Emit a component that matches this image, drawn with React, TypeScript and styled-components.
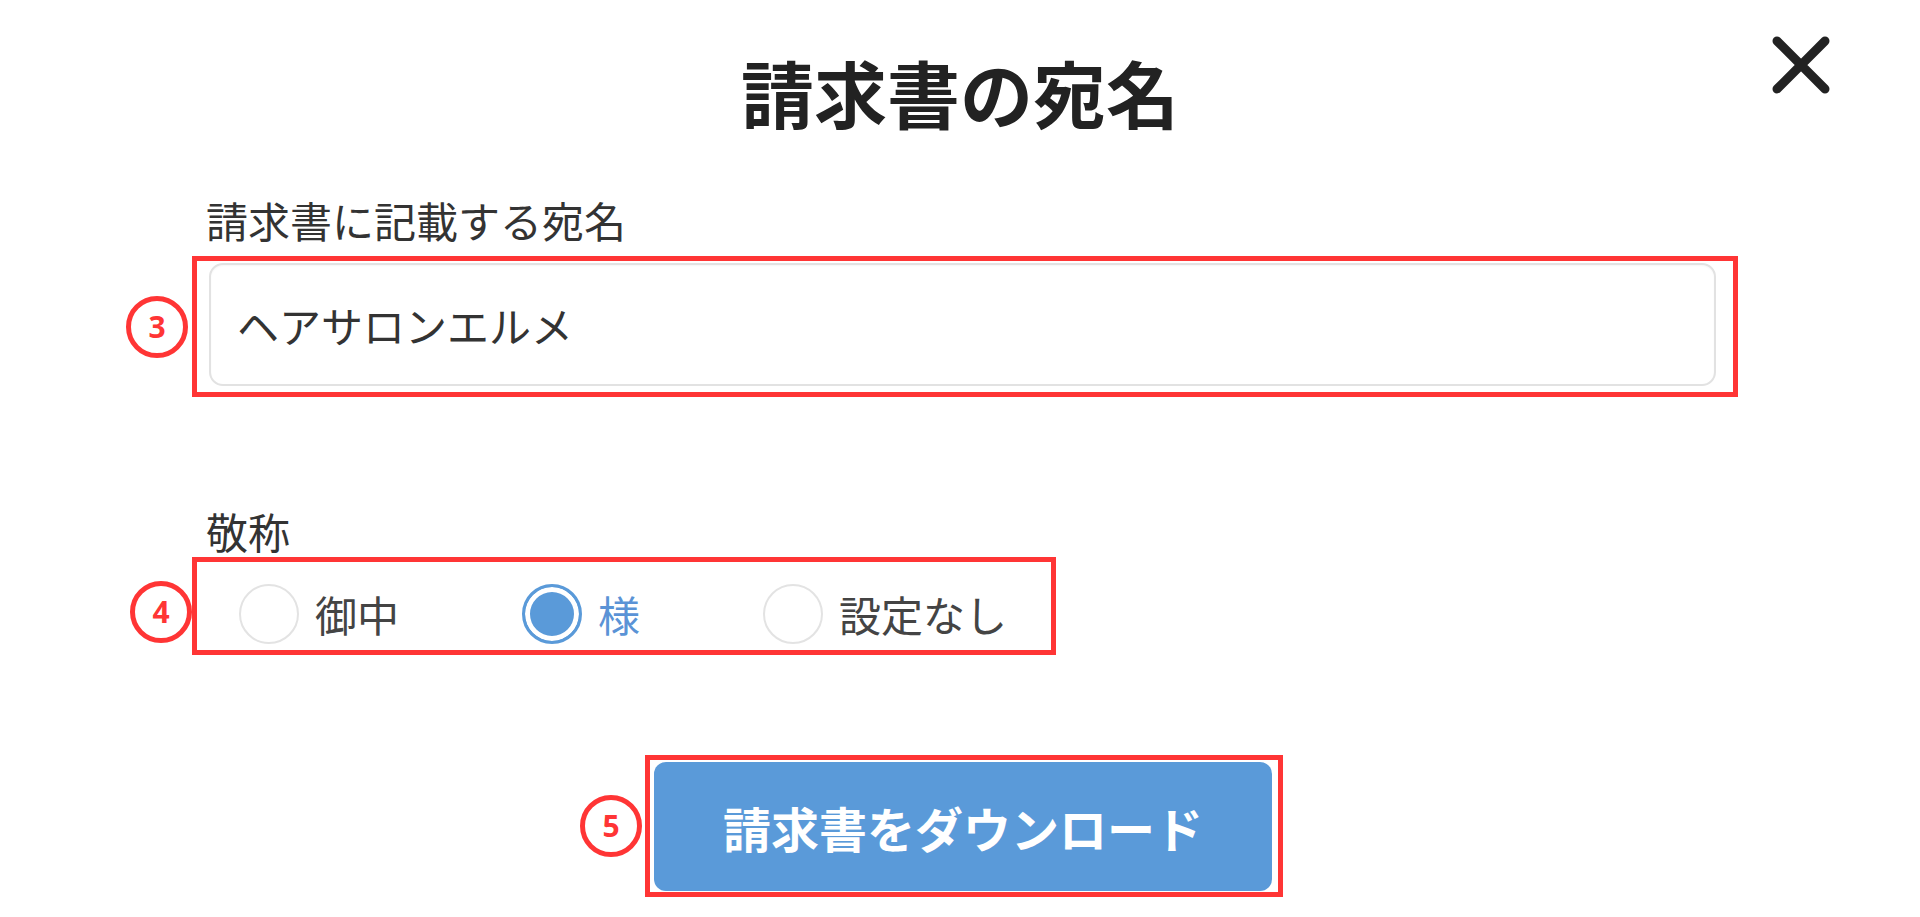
import React from "react";
import styled, { createGlobalStyle } from "styled-components";

const GlobalStyle = createGlobalStyle`
  html, body {
    margin: 0;
    padding: 0;
    background: #ffffff;
  }
  body {
    font-family: "Noto Sans CJK JP", "Noto Sans", sans-serif;
    color: #333333;
  }
`;

const RED = "#ff3535";
const BLUE = "#5a9ad9";

const Page = styled.div`
  position: relative;
  width: 1920px;
  height: 917px;
  overflow: hidden;
  padding-top: 41px;
  box-sizing: border-box;
`;

const CloseButton = styled.button`
  position: absolute;
  top: 34px;
  right: 88px;
  width: 62px;
  height: 62px;
  padding: 0;
  border: none;
  background: none;
  cursor: pointer;
  svg {
    display: block;
  }
`;

const Title = styled.h1`
  margin: 0;
  text-align: center;
  font-size: 73px;
  line-height: 100px;
  font-weight: 700;
  color: #222222;
`;

const Form = styled.div`
  margin: 54px 0 0 192px;
  width: 1546px;
`;

const FieldLabel = styled.div<{ $top?: number; $bottom: number }>`
  margin: ${(p) => p.$top ?? 0}px 0 ${(p) => p.$bottom}px;
  padding-left: 14px;
  font-size: 42px;
  line-height: 50px;
  color: #333333;
`;

const CalloutBox = styled.div<{ $pad: string; $width?: number }>`
  position: relative;
  box-sizing: border-box;
  width: ${(p) => (p.$width ? `${p.$width}px` : "auto")};
  border: 5px solid ${RED};
  padding: ${(p) => p.$pad};
`;

const Marker = styled.span<{ $gap: number; $shift: number }>`
  position: absolute;
  right: calc(100% + ${(p) => p.$gap}px);
  top: 50%;
  transform: translateY(calc(-50% + ${(p) => p.$shift}px));
  width: 62px;
  height: 62px;
  box-sizing: border-box;
  border: 5px solid ${RED};
  border-radius: 50%;
  display: flex;
  align-items: center;
  justify-content: center;
  font-family: "Noto Sans", "Open Sans", sans-serif;
  font-weight: 700;
  font-size: 30px;
  line-height: 1;
  color: ${RED};
`;

const Callout = ({
  num,
  pad,
  width,
  gap,
  shift = 0,
  children,
}: {
  num: number;
  pad: string;
  width?: number;
  gap: number;
  shift?: number;
  children: React.ReactNode;
}) => (
  <CalloutBox $pad={pad} $width={width}>
    <Marker $gap={gap} $shift={shift}>
      {num}
    </Marker>
    {children}
  </CalloutBox>
);

const NameInput = styled.input`
  display: block;
  box-sizing: border-box;
  width: 100%;
  height: 123px;
  margin: 0;
  padding: 0 26px;
  border: 2px solid #e2e2e2;
  border-radius: 14px;
  box-shadow: inset 0 1px 2px rgba(0, 0, 0, 0.04);
  background: #ffffff;
  font-family: "Noto Sans CJK JP", "Noto Sans", sans-serif;
  font-size: 42px;
  color: #333333;
  outline: none;
`;

const RadioGroup = styled.div`
  display: flex;
  align-items: center;
  gap: 123px;
`;

const RadioOption = styled.label<{ $checked: boolean }>`
  display: flex;
  align-items: center;
  gap: 16px;
  font-size: 42px;
  line-height: 60px;
  color: ${(p) => (p.$checked ? "#5a93d6" : "#444444")};
  cursor: pointer;
`;

const RadioCircle = styled.span<{ $checked: boolean }>`
  width: 60px;
  height: 60px;
  box-sizing: border-box;
  border-radius: 50%;
  flex-shrink: 0;
  border: ${(p) => (p.$checked ? `3px solid ${BLUE}` : "2px solid #e3e3e3")};
  background: ${(p) => (p.$checked ? BLUE : "#ffffff")};
  box-shadow: ${(p) => (p.$checked ? "inset 0 0 0 5px #ffffff" : "none")};
`;

const ButtonRow = styled.div`
  margin-top: 100px;
  display: flex;
  justify-content: center;
  padding-left: 8px;
`;

const DownloadButton = styled.button`
  display: block;
  width: 618px;
  height: 129px;
  border: none;
  border-radius: 12px;
  background: ${BLUE};
  color: #ffffff;
  font-family: "Noto Sans CJK JP", "Noto Sans", sans-serif;
  font-size: 48px;
  font-weight: 700;
  cursor: pointer;
`;

const honorifics = ["御中", "様", "設定なし"];

export default function App() {
  const [honorific, setHonorific] = React.useState(1);

  return (
    <Page>
      <GlobalStyle />
      <CloseButton aria-label="閉じる">
        <svg width="62" height="62" viewBox="0 0 62 62">
          <path
            d="M7 7 L55 55 M55 7 L7 55"
            stroke="#222222"
            strokeWidth="9"
            strokeLinecap="round"
          />
        </svg>
      </CloseButton>
      <Title>請求書の宛名</Title>
      <Form>
        <FieldLabel $bottom={11}>請求書に記載する宛名</FieldLabel>
        <Callout num={3} pad="2px 17px 6px 12px" gap={9}>
          <NameInput defaultValue="ヘアサロンエルメ" />
        </Callout>
        <FieldLabel $top={109} $bottom={1}>
          敬称
        </FieldLabel>
        <Callout num={4} pad="22px 0 6px 42px" width={864} gap={5} shift={6}>
          <RadioGroup>
            {honorifics.map((h, index) => (
              <RadioOption
                key={h}
                $checked={honorific === index}
                onClick={() => setHonorific(index)}
              >
                <RadioCircle $checked={honorific === index} />
                {h}
              </RadioOption>
            ))}
          </RadioGroup>
        </Callout>
      </Form>
      <ButtonRow>
        <Callout num={5} pad="2px 6px 1px 4px" gap={8}>
          <DownloadButton>請求書をダウンロード</DownloadButton>
        </Callout>
      </ButtonRow>
    </Page>
  );
}
